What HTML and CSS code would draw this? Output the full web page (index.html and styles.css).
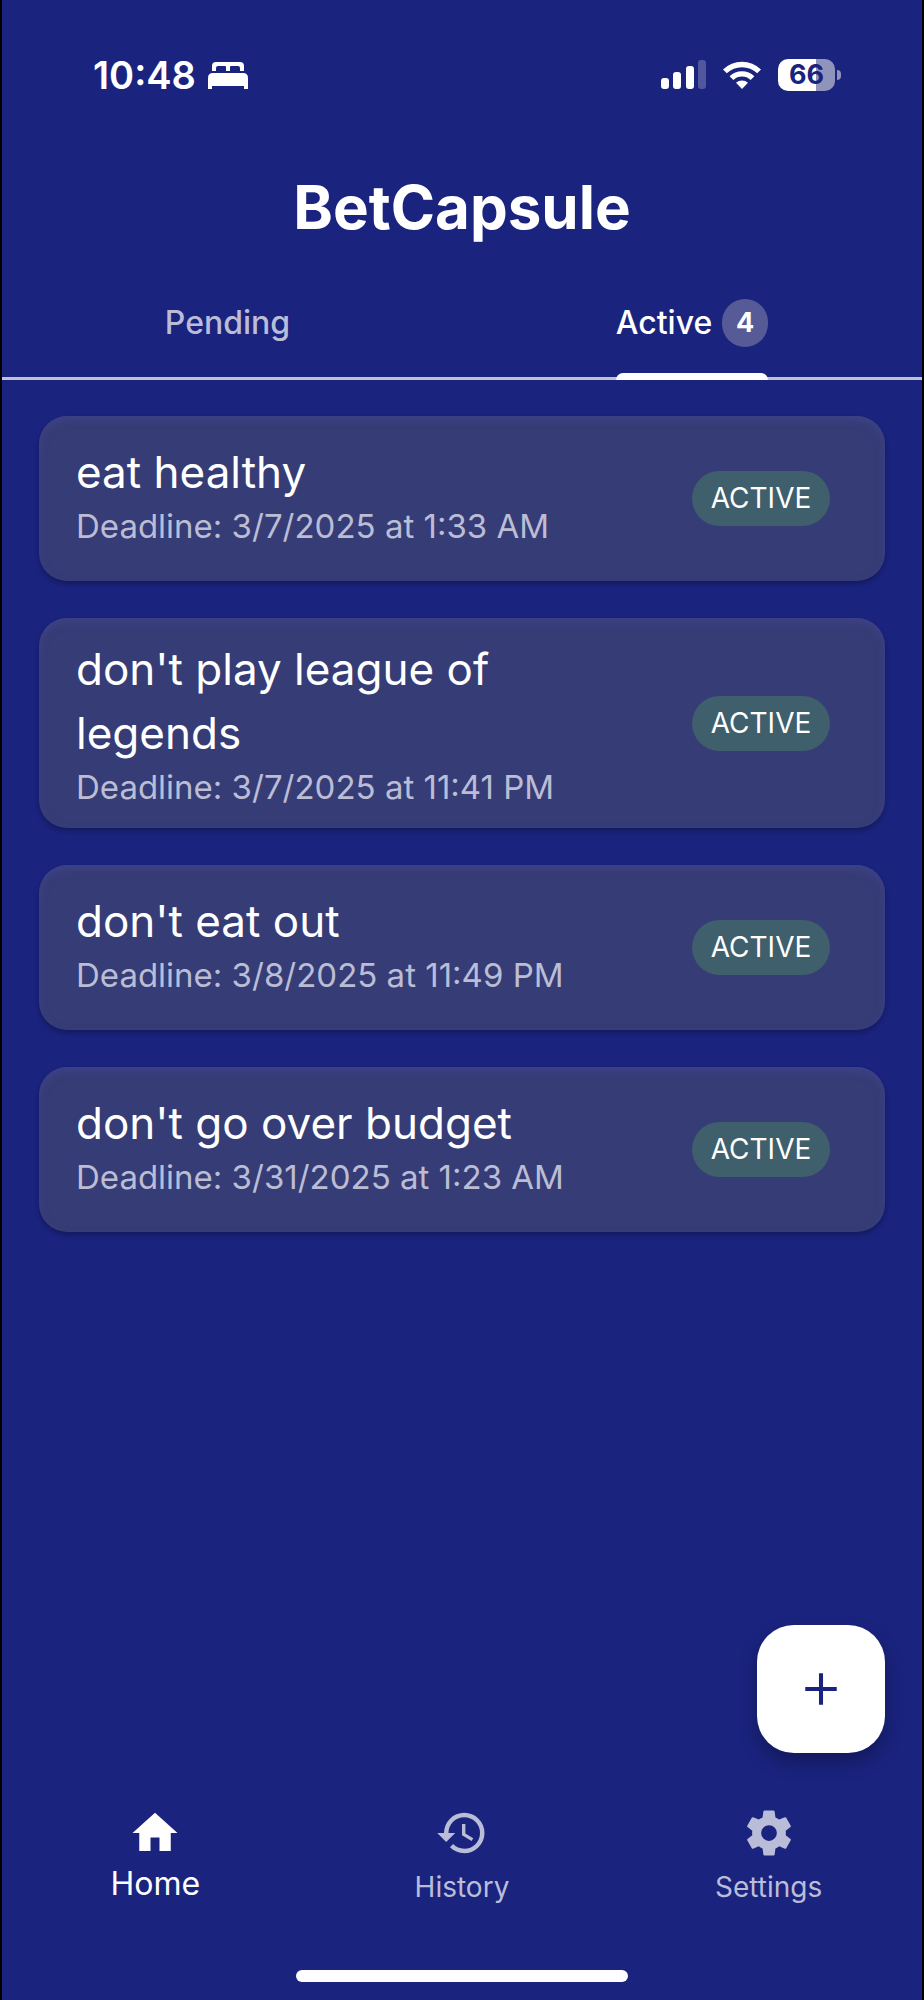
FILE: index.html
```html
<!DOCTYPE html>
<html lang="en">
<head>
<meta charset="utf-8">
<meta name="viewport" content="width=device-width, initial-scale=1">
<title>BetCapsule</title>
<link rel="stylesheet" href="styles.css">
</head>
<body>
<div class="app">
  <div class="status">
    <div class="status-group">
      <span class="time">10:48</span>
      <svg class="bed" viewBox="0 0 40 28" aria-hidden="true"><path d="M4 10V5q0-4 4-4h24q4 0 4 4v5h-4V7q0-2-2-2h-7q-1 0-1 1v4h-4V6q0-1-1-1h-7q-2 0-2 2v3zM0 28V17q0-5 5-5h30q5 0 5 5v11h-4v-3H4v3z"/></svg>
    </div>
    <div class="status-group status-right">
      <svg class="signal" viewBox="0 0 45 30" aria-hidden="true"><rect x="0" y="18" width="8" height="11" rx="3"/><rect x="12" y="12" width="8" height="17" rx="3"/><rect x="25" y="6" width="8" height="23" rx="3"/><rect x="37" y="0" width="8" height="29" rx="3" opacity=".24"/></svg>
      <svg class="wifi" viewBox="0 0 38 28" aria-hidden="true"><path d="M0 8.500A27 27 0 0 1 38 8.500L34.200 12.300A22 22 0 0 0 3.800 12.300zM6.600 15.200A18 18 0 0 1 31.400 15.200L27.600 19A12.500 12.500 0 0 0 10.400 19zM13 21.800A9 9 0 0 1 25 21.800L19 28z"/></svg>
      <div class="battery"><span class="battery-level">66</span><span class="battery-cap"></span></div>
    </div>
  </div>

  <h1 class="brand">BetCapsule</h1>

  <div class="tabs" role="tablist">
    <button class="tab" role="tab" aria-selected="false"><span class="tab-label tab-plain">Pending</span></button>
    <button class="tab tab-active" role="tab" aria-selected="true"><span class="tab-label">Active <span class="count">4</span></span></button>
  </div>

  <main class="content">
    <article class="card">
      <div class="card-text"><h2 class="card-title">eat healthy</h2><p class="deadline">Deadline: 3/7/2025 at 1:33 AM</p></div>
      <span class="chip">ACTIVE</span>
    </article>
    <article class="card card-tall">
      <div class="card-text"><h2 class="card-title">don't play league of legends</h2><p class="deadline">Deadline: 3/7/2025 at 11:41 PM</p></div>
      <span class="chip">ACTIVE</span>
    </article>
    <article class="card">
      <div class="card-text"><h2 class="card-title">don't eat out</h2><p class="deadline">Deadline: 3/8/2025 at 11:49 PM</p></div>
      <span class="chip">ACTIVE</span>
    </article>
    <article class="card">
      <div class="card-text"><h2 class="card-title">don't go over budget</h2><p class="deadline">Deadline: 3/31/2025 at 1:23 AM</p></div>
      <span class="chip">ACTIVE</span>
    </article>
    <button class="fab" aria-label="Add bet"><svg class="icon" viewBox="0 0 24 24" aria-hidden="true"><path d="M19 12.900H12.900V19H11.100V12.900H5V11.100H11.100V5H12.900V11.100H19z"/></svg></button>
  </main>

  <nav class="nav">
    <a class="nav-item nav-current" href="#home" aria-current="page">
      <svg class="icon" viewBox="0 0 24 24" aria-hidden="true"><path d="M10 20V14H14V20H19V12H22L12 3L2 12H5V20H10Z"/></svg>
      <span class="nav-label">Home</span>
    </a>
    <a class="nav-item" href="#history">
      <svg class="icon" viewBox="0 0 24 24" aria-hidden="true"><path d="M13.500 8H12V13L16.280 15.540L17 14.330L13.500 12.250V8M13 3A9 9 0 0 0 4 12H1L4.960 16.030L9 12H6A7 7 0 0 1 13 5A7 7 0 0 1 20 12A7 7 0 0 1 13 19C11.070 19 9.320 18.210 8.060 16.940L6.640 18.360C8.270 20 10.500 21 13 21A9 9 0 0 0 22 12A9 9 0 0 0 13 3"/></svg>
      <span class="nav-label">History</span>
    </a>
    <a class="nav-item" href="#settings">
      <svg class="icon" viewBox="0 0 24 24" aria-hidden="true"><path d="M12 15.500A3.500 3.500 0 0 1 8.500 12A3.500 3.500 0 0 1 12 8.500A3.500 3.500 0 0 1 15.500 12A3.500 3.500 0 0 1 12 15.500M19.430 12.970C19.470 12.650 19.500 12.330 19.500 12C19.500 11.670 19.470 11.340 19.430 11L21.540 9.370C21.730 9.220 21.780 8.950 21.660 8.730L19.660 5.270C19.540 5.050 19.270 4.960 19.050 5.050L16.560 6.050C16.040 5.660 15.500 5.320 14.870 5.070L14.500 2.420C14.460 2.180 14.250 2 14 2H10C9.750 2 9.540 2.180 9.500 2.420L9.130 5.070C8.500 5.320 7.960 5.660 7.440 6.050L4.950 5.050C4.730 4.960 4.460 5.050 4.340 5.270L2.340 8.730C2.210 8.950 2.270 9.220 2.460 9.370L4.570 11C4.530 11.340 4.500 11.670 4.500 12C4.500 12.330 4.530 12.650 4.570 12.970L2.460 14.630C2.270 14.780 2.210 15.050 2.340 15.270L4.340 18.730C4.460 18.950 4.730 19.030 4.950 18.950L7.440 17.940C7.960 18.340 8.500 18.680 9.130 18.930L9.500 21.580C9.540 21.820 9.750 22 10 22H14C14.250 22 14.460 21.820 14.500 21.580L14.870 18.930C15.500 18.670 16.040 18.340 16.560 17.940L19.050 18.950C19.270 19.030 19.540 18.950 19.660 18.730L21.660 15.270C21.780 15.050 21.730 14.780 21.540 14.630L19.430 12.970Z"/></svg>
      <span class="nav-label">Settings</span>
    </a>
  </nav>
  <div class="home-bar"></div>
</div>
</body>
</html>
```

FILE: styles.css
```css
* { box-sizing: border-box; }

body {
  margin: 0;
  background: #1a237e;
  color: #fff;
  font-family: Inter, "Liberation Sans", sans-serif;
}

h1, h2, p { margin: 0; font-weight: 400; }

button {
  border: 0;
  padding: 0;
  background: none;
  color: inherit;
  font: inherit;
  cursor: pointer;
}

svg { display: block; fill: currentColor; }

.app {
  display: flex;
  flex-direction: column;
  min-height: 100vh;
  border: solid #000;
  border-width: 0 2px;
}

.status {
  display: flex;
  justify-content: space-between;
  align-items: center;
  padding: 51px 81px 0 91px;
}
.status-group { display: flex; align-items: center; gap: 12px; }
.status-right { gap: 17px; }
.time { font-size: 38px; line-height: 48px; font-weight: 600; }
.bed { width: 40px; height: 28px; }
.signal { width: 45px; height: 30px; }
.wifi { width: 38px; height: 28px; }
.battery { display: flex; align-items: center; gap: 2px; }
.battery-level {
  width: 57px;
  border-radius: 10px;
  background: linear-gradient(90deg, #fff 66%, #9194ba 66%);
  color: #1a237e;
  font-size: 27px;
  line-height: 32px;
  font-weight: 700;
  text-align: center;
}
.battery-cap { width: 4px; height: 10px; border-radius: 0 4px 4px 0; background: #9194ba; }

.brand {
  padding-top: 68px;
  font-size: 60px;
  line-height: 80px;
  font-weight: 700;
  text-align: center;
}

.tabs {
  display: grid;
  grid-template-columns: 1fr 1fr;
  height: 133px;
  border-bottom: 3px solid #c0c1d3;
}
.tab {
  display: flex;
  justify-content: center;
  margin-bottom: -3px;
  color: #babdd8;
  font-size: 32px;
  font-weight: 500;
}
.tab-label {
  display: flex;
  align-items: center;
  gap: 10px;
  height: 100%;
  padding-bottom: 20px;
  padding-top: 38px;
  padding-bottom: 20px;
}
.tab-active { color: #fff; }
.tab-plain { padding-right: 9px; }
.tab-active .tab-label { position: relative; }
.tab-active .tab-label::after {
  content: "";
  position: absolute;
  left: 0;
  right: 0;
  bottom: 0;
  height: 7px;
  border-radius: 7px 7px 0 0;
  background: #fff;
}
.count {
  width: 46px;
  border-radius: 24px;
  background: #565a96;
  font-size: 27px;
  line-height: 48px;
  font-weight: 700;
  text-align: center;
}

.content {
  flex: 1;
  display: flex;
  flex-direction: column;
  gap: 37px;
  padding: 36px 37px;
}
.card {
  display: flex;
  align-items: center;
  justify-content: space-between;
  gap: 24px;
  min-height: 165px;
  padding: 19px 55px 19px 37px;
  border-radius: 28px;
  background: #363c75;
  box-shadow: 0 3px 5px rgba(0, 0, 0, .25), inset 0 4px 8px rgba(66, 70, 150, .6);
}
.card-text { flex: 1; max-width: 480px; padding-bottom: 10px; }
.card-tall .card-text { padding-bottom: 0; }
.card-title { font-size: 44px; line-height: 64px; }
.deadline { color: #bbbdd5; font-size: 33px; line-height: 44px; white-space: nowrap; }
.chip {
  width: 138px;
  border-radius: 28px;
  background: #3e5f6b;
  font-size: 28px;
  line-height: 55px;
  text-align: center;
}

.fab {
  display: flex;
  align-items: center;
  justify-content: center;
  align-self: flex-end;
  margin-top: auto;
  width: 128px;
  height: 128px;
  border-radius: 37px;
  background: #fff;
  color: #1a237e;
  box-shadow: 0 9px 18px rgba(0, 0, 0, .28);
}
.icon { width: 54px; height: 54px; }

.nav { display: grid; grid-template-columns: repeat(3, 1fr); padding-top: 17px; }
.nav-item {
  display: flex;
  flex-direction: column;
  align-items: center;
  gap: 7px;
  color: #babdd8;
  font-size: 28px;
  line-height: 40px;
  text-decoration: none;
}
.nav-current { gap: 4px; color: #fff; font-size: 32px; }
.home-bar {
  align-self: center;
  width: 36%;
  height: 12px;
  margin: 63px 0 18px;
  border-radius: 6px;
  background: #fff;
}
```
